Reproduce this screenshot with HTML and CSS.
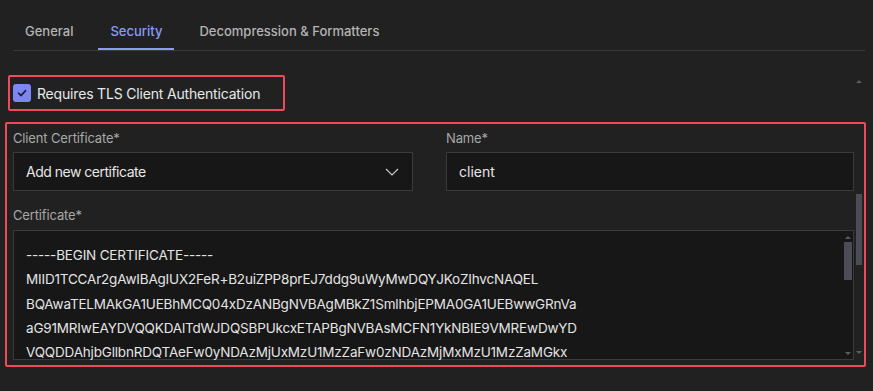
FILE: index.html
```html
<!DOCTYPE html>
<html lang="en">
<head>
  <meta charset="UTF-8" />
  <title>Security settings</title>
  <link rel="stylesheet" href="styles.css">
</head>
<body>

  <nav class="tabs">
    <a class="tab" href="#">General</a>
    <a class="tab active" href="#">Security</a>
    <a class="tab" href="#">Decompression &amp; Formatters</a>
  </nav>

  <section class="panel">
    <!-- TLS toggle -->
    <label class="tls-row highlight">
      <span class="checkbox">
        <svg width="12" height="12" viewBox="0 0 12 12"><path d="M2.5 6.2 L5 8.6 L9.6 3.6" fill="none" stroke="#1d1f33" stroke-width="1.6" stroke-linecap="round" stroke-linejoin="round"/></svg>
      </span>
      Requires TLS Client Authentication
    </label>

    <!-- certificate fields -->
    <div class="cert-box highlight">
      <div class="field-grid">
        <div class="field">
          <div class="field-label">Client Certificate*</div>
          <div class="select">
            <span>Add new certificate</span>
            <svg width="14" height="8" viewBox="0 0 14 8"><path d="M1 1 L7 7 L13 1" fill="none" stroke="#c8c8c8" stroke-width="1.2"/></svg>
          </div>
        </div>
        <div class="field">
          <div class="field-label">Name*</div>
          <div class="input">client</div>
        </div>
      </div>

      <div class="field-label cert-label">Certificate*</div>
      <div class="textarea">
        <div class="cert-text">
          <div>-----BEGIN CERTIFICATE-----</div>
          <div>MIID1TCCAr2gAwIBAgIUX2FeR+B2uiZPP8prEJ7ddg9uWyMwDQYJKoZIhvcNAQEL</div>
          <div>BQAwaTELMAkGA1UEBhMCQ04xDzANBgNVBAgMBkZ1SmlhbjEPMA0GA1UEBwwGRnVa</div>
          <div>aG91MRIwEAYDVQQKDAlTdWJDQSBPUkcxETAPBgNVBAsMCFN1YkNBIE9VMREwDwYD</div>
          <div>VQQDDAhjbGllbnRDQTAeFw0yNDAzMjUxMzU1MzZaFw0zNDAzMjMxMzU1MzZaMGkx</div>
        </div>
        <div class="scrollbar inner-scroll">
          <span class="arrow up"></span>
          <span class="thumb"></span>
          <span class="arrow down"></span>
        </div>
      </div>
    </div>

    <div class="scrollbar page-scroll">
      <span class="arrow up"></span>
      <span class="thumb"></span>
      <span class="arrow down"></span>
    </div>
  </section>

</body>
</html>
```

FILE: styles.css
```css
body {
  font-family: Inter, 'Noto Sans', sans-serif;
  margin: 0;
  padding: 0;
  background-color: #212121;
  color: #e4e4e4;
  width: 873px;
  height: 391px;
  overflow: hidden;
}

.tabs {
  display: flex;
  gap: 13px;
  margin: 0 8px 0 13px;
  border-bottom: 1px solid #3b3b3b;
}

.tab {
  padding: 22px 12px 8px;
  line-height: 18px;
  font-size: 13px;
  font-weight: 500;
  color: #b4b4b4;
  text-decoration: none;
  border-bottom: 2px solid transparent;
}

.tab.active {
  color: #8c9cf4;
  border-bottom-color: #8c9cf4;
}

.panel {
  position: relative;
  padding-top: 24px;
  height: 316px;
}

.highlight {
  border: 2px solid #f04a5a;
  border-radius: 2px;
}

.tls-row {
  display: flex;
  align-items: center;
  gap: 6px;
  width: 270px;
  height: 32px;
  margin-left: 8px;
  padding-left: 3px;
  font-size: 14px;
  letter-spacing: -0.18px;
  color: #e8e8e8;
}

.checkbox {
  width: 18px;
  height: 18px;
  border-radius: 3px;
  background: #7d86f3;
  display: flex;
  align-items: center;
  justify-content: center;
}

.cert-box {
  margin: 11px 0 0 5px;
  width: 843px;
  height: 236px;
  padding: 5px 8px 0 6px;
  overflow: hidden;
}

.field-grid {
  display: grid;
  grid-template-columns: 400px 408px;
  gap: 33px;
}

.field-label {
  font-size: 13px;
  line-height: 18px;
  letter-spacing: -0.15px;
  color: #a8a8a8;
  margin-bottom: 5px;
}

.cert-label {
  margin: 15px 0 6px;
}

.select, .input {
  height: 37px;
  border: 1px solid #3a3a3a;
  background: #171717;
  display: flex;
  align-items: center;
  padding: 0 13px 0 12px;
  font-size: 14px;
  color: #e6e6e6;
}

.select {
  justify-content: space-between;
  letter-spacing: -0.5px;
}

.textarea {
  position: relative;
  height: 130px;
  border: 1px solid #3a3a3a;
  background: #171717;
  box-sizing: border-box;
  width: 841px;
}

.cert-text {
  padding: 12px 12px 0;
  font-size: 13.5px;
  line-height: 24.3px;
  letter-spacing: -0.18px;
  color: #e4e4e4;
  white-space: nowrap;
}

/* scrollbars drawn over the content */
.scrollbar {
  position: absolute;
}

.scrollbar .thumb {
  position: absolute;
  left: 0;
  right: 0;
  background: #4b4c55;
}

.scrollbar .arrow {
  position: absolute;
  left: 50%;
  margin-left: -3px;
  width: 0;
  height: 0;
  border-left: 3px solid transparent;
  border-right: 3px solid transparent;
}

.scrollbar .arrow.up {
  border-bottom: 3px solid #5c5c5c;
}

.scrollbar .arrow.down {
  border-top: 3px solid #5c5c5c;
}

.inner-scroll {
  top: 0;
  right: 1px;
  width: 8px;
  height: 128px;
}

.inner-scroll .arrow.up { top: 5px; }
.inner-scroll .thumb { top: 11px; height: 38px; }
.inner-scroll .arrow.down { top: 121px; }

.page-scroll {
  top: 0;
  left: 856px;
  width: 6px;
  height: 310px;
}

.page-scroll .arrow.up { top: 29px; }
.page-scroll .thumb { top: 143px; height: 71px; }
.page-scroll .arrow.down { top: 300px; }
```
